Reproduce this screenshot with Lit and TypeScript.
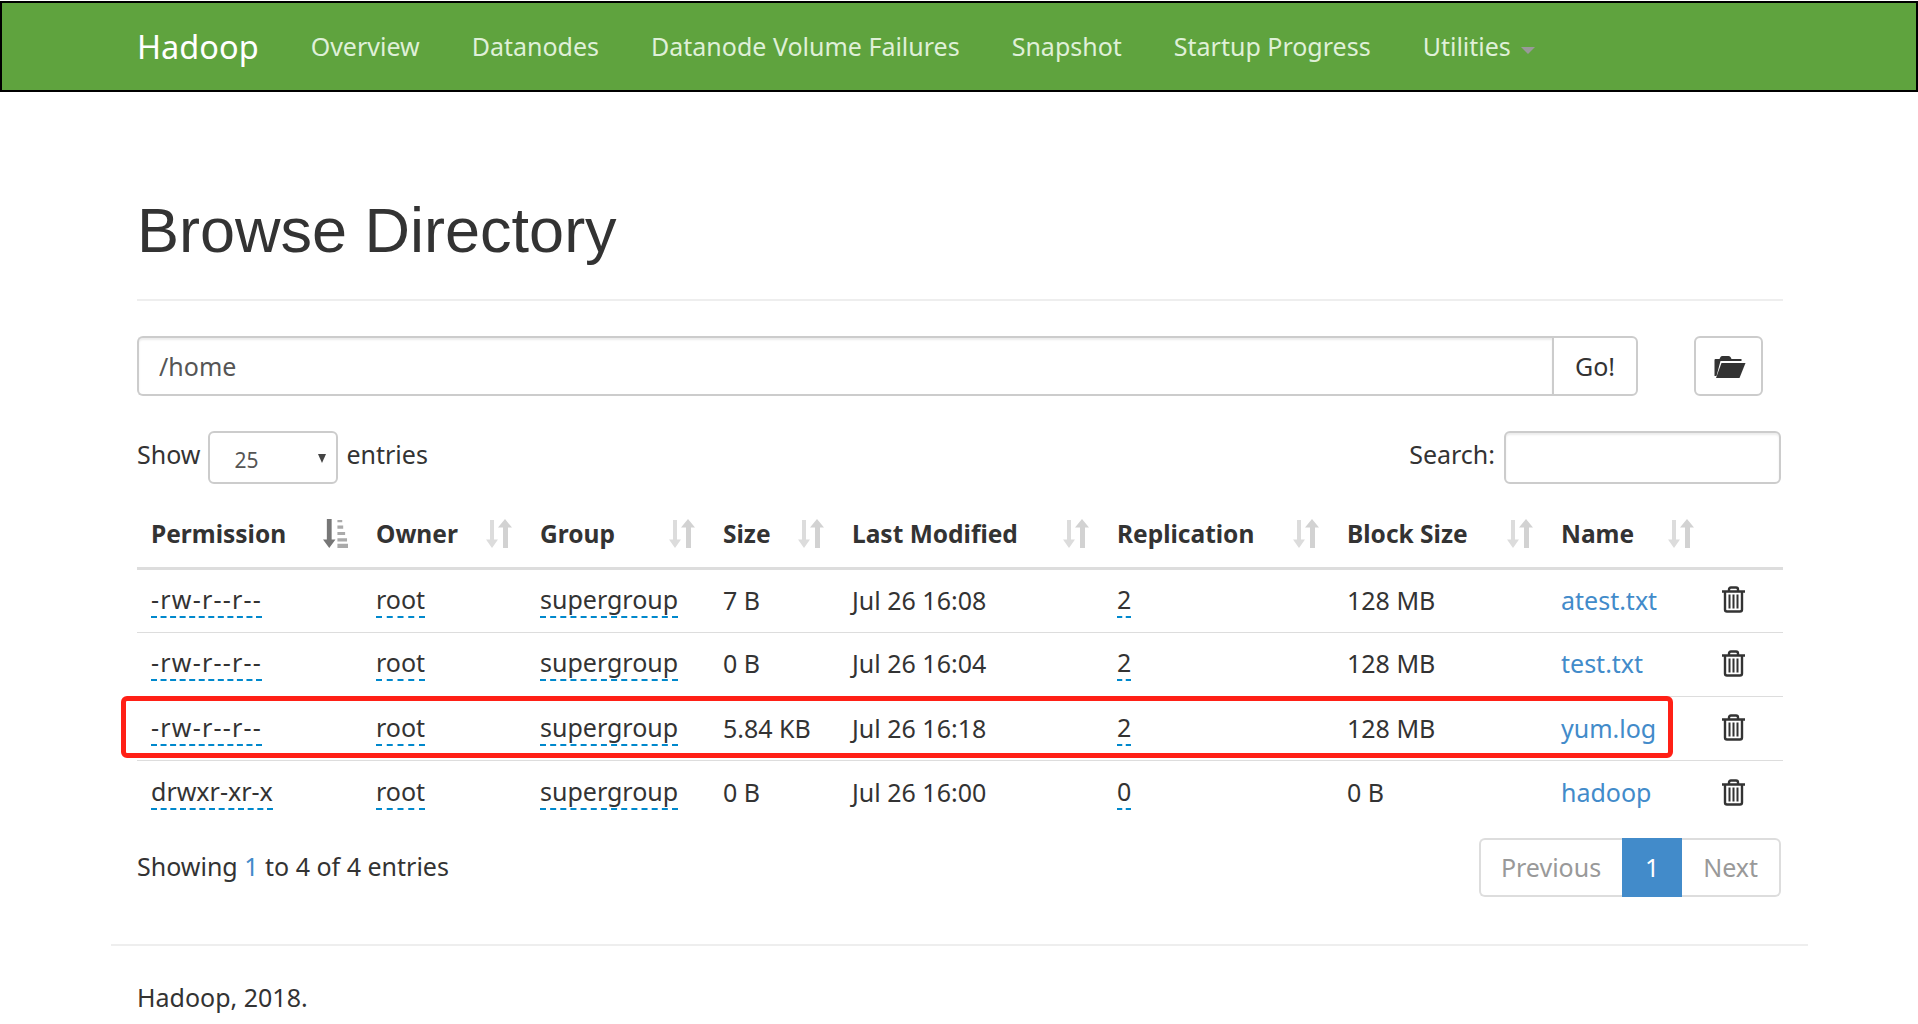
import { css, html, LitElement, svg } from "lit";
import { customElement } from "lit/decorators.js";
import { classMap } from "lit/directives/class-map.js";

const navLinks = [
  "Overview",
  "Datanodes",
  "Datanode Volume Failures",
  "Snapshot",
  "Startup Progress",
];

const columns = [
  { label: "Permission", width: 225 },
  { label: "Owner", width: 164 },
  { label: "Group", width: 183 },
  { label: "Size", width: 129 },
  { label: "Last Modified", width: 265 },
  { label: "Replication", width: 230 },
  { label: "Block Size", width: 214 },
  { label: "Name", width: 161 },
];

const rows = [
  ["-rw-r--r--", "root", "supergroup", "7 B", "Jul 26 16:08", "2", "128 MB", "atest.txt"],
  ["-rw-r--r--", "root", "supergroup", "0 B", "Jul 26 16:04", "2", "128 MB", "test.txt"],
  ["-rw-r--r--", "root", "supergroup", "5.84 KB", "Jul 26 16:18", "2", "128 MB", "yum.log"],
  ["drwxr-xr-x", "root", "supergroup", "0 B", "Jul 26 16:00", "0", "0 B", "hadoop"],
];

// down arrow + up arrow, the unsorted datatables glyph
const sortIcon = html`<svg class="sort" width="26" height="29" viewBox="0 0 26 27" preserveAspectRatio="none">
  <path fill="#dcdcdc" d="M4 1h4v18h4l-6 8-6-8h4z" />
  <path fill="#d2d2d2" d="M19 0l7 8h-4v19h-5V8h-5z" />
</svg>`;

// down arrow + stacked bars, the sorted-ascending glyph
const sortedIcon = html`<svg class="sort" width="25" height="29" viewBox="0 0 26 27" preserveAspectRatio="none">
  <path fill="#777" d="M4 0h5v19h4l-6.500 8L0 19h4z" />
  <path fill="#aaa" d="M15 1h5v2h-5zM15 6h6v3h-6zM15 12h8v3h-8zM15 18h10v3H15zM15 23h11v4H15z" />
</svg>`;

const trashIcon = svg`<path fill="none" stroke="#333" stroke-width="2.400" d="M0 5h23M7 5V3q0-2 2-2h5q2 0 2 2v2M3 5v18q0 2 2 2h13q2 0 2-2V5" />
  <path fill="none" stroke="#333" stroke-width="2" d="M7.500 8v14M11.500 8v14M15.500 8v14" />`;

const folderIcon = svg`<path fill="#333" d="M0 6q0-1 1-1h4l1-2q.500-1 2-1h6q1 0 2 1l1 2h10v2H6L2 22H0z" /><path fill="#333" d="M7 9h24l-6 15H1.500z" />`;

@customElement("app-root")
export class AppRoot extends LitElement {
  static styles = css`
    :host {
      display: block;
      font-family: "Noto Sans", sans-serif;
      font-size: 25px;
      color: #333;
      background: #fff;
      min-height: 1024px;
    }
    .navbar {
      display: flex;
      align-items: center;
      height: 87px;
      margin-top: 1px;
      padding-left: 135px;
      background: #5fa33e;
      border: 2px solid #000;
    }
    .brand {
      color: #fff;
      font-size: 32.500px;
      margin-right: 52px;
    }
    .nav-link {
      color: #dff0d8;
      margin: 0 52px 2px 0;
    }
    .caret {
      display: inline-block;
      margin-left: 10px;
      vertical-align: 2px;
      border-top: 7px solid #999;
      border-left: 7px solid transparent;
      border-right: 7px solid transparent;
    }
    .container {
      width: 1646px;
      margin-left: 137px;
    }
    h1 {
      margin: 0;
      padding-top: 98px;
      padding-bottom: 28px;
      font-family: "Liberation Sans", Arial, sans-serif;
      font-size: 63px;
      font-weight: 400;
      line-height: 81px;
      border-bottom: 2px solid #eee;
    }
    .path-row {
      display: flex;
      margin-top: 35px;
      height: 60px;
    }
    .path-input {
      box-sizing: border-box;
      width: 1415px;
      height: 60px;
      padding: 0 20px;
      font: inherit;
      color: #555;
      border: 2px solid #ccc;
      border-right: 0;
      border-radius: 6px 0 0 6px;
      box-shadow: inset 0 2px 2px rgba(0, 0, 0, 0.075);
      outline: none;
    }
    .go {
      box-sizing: border-box;
      width: 86px;
      height: 60px;
      font: inherit;
      color: #333;
      background: #fff;
      border: 2px solid #ccc;
      border-radius: 0 6px 6px 0;
    }
    .folder {
      display: flex;
      align-items: center;
      justify-content: center;
      box-sizing: border-box;
      width: 69px;
      height: 60px;
      margin-left: 56px;
      padding: 0 0 0 2px;
      background: #fff;
      border: 2px solid #ccc;
      border-radius: 6px;
    }
    .controls {
      display: flex;
      justify-content: space-between;
      align-items: center;
      margin-top: 35px;
      height: 53px;
    }
    .group {
      display: flex;
      align-items: center;
      gap: 8px;
    }
    .label {
      margin-bottom: 8px;
    }
    .select {
      position: relative;
      box-sizing: border-box;
      width: 130px;
      height: 53px;
      border: 2px solid #ccc;
      border-radius: 6px;
    }
    .select select {
      width: 100%;
      height: 100%;
      padding: 4px 0 0 24px;
      border: 0;
      background: transparent;
      font-size: 21px;
      font-family: inherit;
      color: #555;
      appearance: none;
      outline: none;
    }
    .select::after {
      content: "";
      position: absolute;
      right: 10px;
      top: 21px;
      border-top: 9px solid #444;
      border-left: 4.500px solid transparent;
      border-right: 4.500px solid transparent;
    }
    .search {
      box-sizing: border-box;
      width: 277px;
      height: 53px;
      border: 2px solid #ccc;
      border-radius: 6px;
      box-shadow: inset 0 2px 2px rgba(0, 0, 0, 0.075);
      outline: none;
      margin: 0 2px 0 1px;
    }
    .table-wrap {
      position: relative;
      margin-top: 25px;
    }
    table {
      width: 100%;
      table-layout: fixed;
      border-collapse: collapse;
    }
    th {
      height: 59px;
      padding: 0 14px 8px 14px;
      font-size: 24.500px;
      font-weight: 700;
      text-align: left;
      border-bottom: 3px solid #ddd;
      box-sizing: border-box;
    }
    .th-inner {
      display: flex;
      justify-content: space-between;
      align-items: center;
    }
    td {
      height: 64.300px;
      padding: 0 0 2px 14px;
      border-bottom: 1px solid #ddd;
      box-sizing: border-box;
      white-space: nowrap;
    }
    tr:last-child td {
      border-bottom: 0;
    }
    .edit {
      display: inline-block;
      line-height: 34px;
      color: #333;
      border-bottom: 2px dashed #08c;
    }
    .edit.dashes {
      letter-spacing: 1.200px;
    }
    .link {
      color: #428bca;
    }
    .trash {
      display: block;
    }
    .highlight {
      position: absolute;
      left: -16px;
      top: 187px;
      width: 1552px;
      height: 62px;
      box-sizing: border-box;
      border: 5px solid #ff2016;
      border-radius: 6px;
      pointer-events: none;
    }
    .bottom {
      display: flex;
      justify-content: space-between;
      align-items: flex-start;
      margin-top: 13px;
    }
    .info {
      margin-top: 11px;
    }
    .info .num {
      color: #428bca;
    }
    .pagination {
      display: flex;
      height: 59px;
      margin-right: 2px;
      line-height: 55px;
    }
    .page {
      box-sizing: border-box;
      color: #999;
      border: 2px solid #ddd;
      padding: 0 21px;
    }
    .page.prev {
      border-right: 0;
      border-radius: 6px 0 0 6px;
      padding-left: 20px;
    }
    .page.next {
      border-left: 0;
      border-radius: 0 6px 6px 0;
    }
    .page.active {
      width: 60px;
      padding: 0;
      text-align: center;
      color: #fff;
      background: #428bca;
      border-color: #428bca;
    }
    .footer-rule {
      width: 1697px;
      margin: 47px 0 0 111px;
      border: 0;
      border-top: 2px solid #eee;
    }
    footer {
      margin: 34px 0 0 137px;
    }
  `;

  render() {
    return html`
      <nav class="navbar">
        <span class="brand">Hadoop</span>
        ${navLinks.map((l) => html`<span class="nav-link">${l}</span>`)}
        <span class="nav-link">Utilities<span class="caret"></span></span>
      </nav>
      <div class="container">
        <h1>Browse Directory</h1>
        <div class="path-row">
          <input class="path-input" .value=${"/home"} />
          <button class="go">Go!</button>
          <button class="folder">
            <svg width="32" height="25" viewBox="0 0 31 25">${folderIcon}</svg>
          </button>
        </div>
        <div class="controls">
          <div class="group">
            <span class="label">Show</span>
            <div class="select">
              <select><option>25</option></select>
            </div>
            <span class="label">entries</span>
          </div>
          <div class="group">
            <span class="label">Search:</span>
            <input class="search" />
          </div>
        </div>
        <div class="table-wrap">
          <table>
            <colgroup>
              ${columns.map((c) => html`<col style="width:${c.width}px" />`)}
              <col />
            </colgroup>
            <thead>
              <tr>
                ${columns.map(
                  (c, i) => html`<th>
                    <div class="th-inner">
                      ${c.label} ${i === 0 ? sortedIcon : sortIcon}
                    </div>
                  </th>`
                )}
                <th></th>
              </tr>
            </thead>
            <tbody>
              ${rows.map(
                (r) => html`<tr>
                  <td>
                    <span class=${classMap({ edit: true, dashes: r[0].startsWith("-") })}>${r[0]}</span>
                  </td>
                  <td><span class="edit">${r[1]}</span></td>
                  <td><span class="edit">${r[2]}</span></td>
                  <td>${r[3]}</td>
                  <td>${r[4]}</td>
                  <td><span class="edit">${r[5]}</span></td>
                  <td>${r[6]}</td>
                  <td><span class="link">${r[7]}</span></td>
                  <td>
                    <svg class="trash" width="23" height="27" viewBox="0 0 23 26">${trashIcon}</svg>
                  </td>
                </tr>`
              )}
            </tbody>
          </table>
          <div class="highlight"></div>
        </div>
        <div class="bottom">
          <div class="info">Showing <span class="num">1</span> to 4 of 4 entries</div>
          <div class="pagination">
            <span class="page prev">Previous</span>
            <span class="page active">1</span>
            <span class="page next">Next</span>
          </div>
        </div>
      </div>
      <hr class="footer-rule" />
      <footer>Hadoop, 2018.</footer>
    `;
  }
}
